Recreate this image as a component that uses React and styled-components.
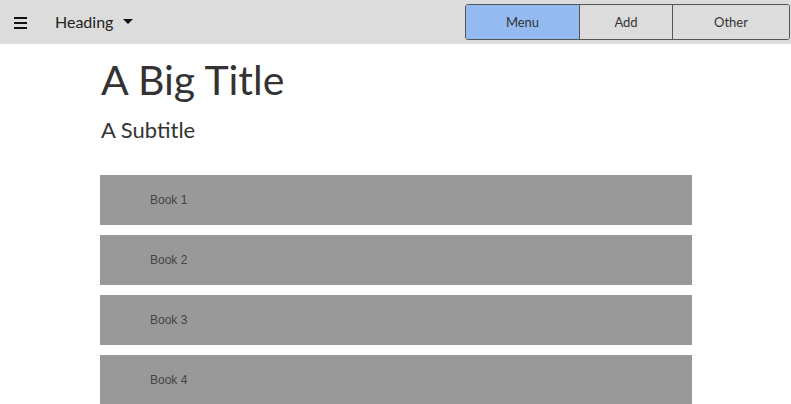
import styled, { createGlobalStyle } from "styled-components";

const GlobalStyle = createGlobalStyle`
  body {
    margin: 0;
    font-family: Lato, "Liberation Sans", sans-serif;
    background: #fff;
  }
`;

const TopBar = styled.header`
  height: 44px;
  background: #dcdcdc;
  display: flex;
  align-items: center;
  padding: 0 1px 0 13px;
  box-sizing: border-box;
`;

const Burger = styled.svg`
  width: 15px;
  height: 12px;
  margin-top: 1px;
`;

const Heading = styled.div`
  margin-left: 27px;
  display: flex;
  align-items: center;
  gap: 10px;
  font-size: 16px;
  color: #222;
  margin-top: -1px;
`;

const Tabs = styled.nav`
  margin-left: auto;
  display: flex;
  height: 36px;
  box-sizing: border-box;
  margin-top: -1px;
  border: 1px solid #555;
  border-radius: 3px;
  overflow: hidden;
`;

const Tab = styled.div`
  width: ${(p) => p.$w}px;
  display: flex;
  align-items: center;
  justify-content: center;
  font-size: 13px;
  color: #333;
  background: ${(p) => (p.$active ? "#93bbf1" : "#dcdcdc")};
  & + & {
    border-left: 1px solid #555;
  }
`;

const Main = styled.main`
  padding: 12px 0 0 100px;
  width: 592px;
`;

const Title = styled.h1`
  margin: 0 0 0 1px;
  font-size: 41px;
  font-weight: 400;
  line-height: 48px;
  color: #333;
`;

const Subtitle = styled.h2`
  margin: 12px 0 0 1px;
  font-size: 22px;
  font-weight: 400;
  line-height: 28px;
  color: #333;
`;

const List = styled.ul`
  list-style: none;
  margin: 31px 0 0;
  padding: 0;
  display: flex;
  flex-direction: column;
  gap: 10px;
`;

const Book = styled.li`
  height: 50px;
  background: #999;
  display: flex;
  align-items: center;
  padding-left: 50px;
  font-size: 12px;
  font-family: "Liberation Sans", Arial, sans-serif;
  color: #444;
`;

const tabs = [
  { label: "Menu", w: 113, active: true },
  { label: "Add", w: 92 },
  { label: "Other", w: 116 },
];

export default function App() {
  return (
    <>
      <GlobalStyle />
      <TopBar>
        <Burger viewBox="0 0 15 12">
          <rect x="1" y="0" width="13" height="2" fill="#111" />
          <rect x="1" y="5" width="13" height="2" fill="#111" />
          <rect x="1" y="10" width="13" height="2" fill="#111" />
        </Burger>
        <Heading>
          Heading
          <svg width="10" height="6" viewBox="0 0 10 6">
            <path d="M0 0 L10 0 L5 5 Z" fill="#111" />
          </svg>
        </Heading>
        <Tabs>
          {tabs.map((t) => (
            <Tab key={t.label} $w={t.w} $active={t.active}>
              {t.label}
            </Tab>
          ))}
        </Tabs>
      </TopBar>
      <Main>
        <Title>A Big Title</Title>
        <Subtitle>A Subtitle</Subtitle>
        <List>
          {[1, 2, 3, 4].map((n) => (
            <Book key={n}>Book {n}</Book>
          ))}
        </List>
      </Main>
    </>
  );
}
